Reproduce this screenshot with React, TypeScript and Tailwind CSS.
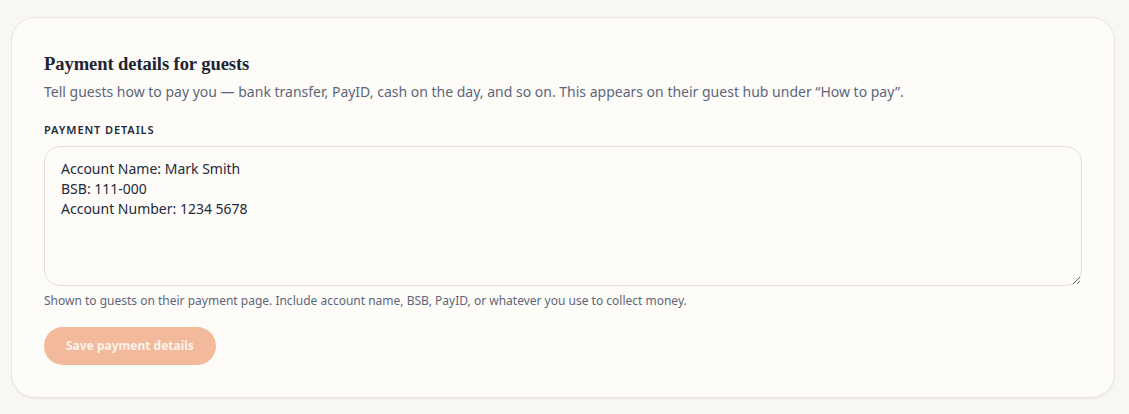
export default function App() {
  return (
    <div className="min-h-[414px] bg-[#f8f7f3] px-[11px] pt-[17px] font-['Noto_Sans',sans-serif]">
      <div className="w-[1104px] rounded-[24px] border border-[#ebe8e1] bg-[#fdfcf9] px-8 pt-8 pb-8 shadow-[0_1px_2px_rgba(0,0,0,0.06)]">
        <h2 className="font-['Liberation_Serif',serif] text-[18.6px] font-bold leading-7 tracking-[-0.1px] text-[#1f2433]">
          Payment details for guests
        </h2>
        <p className="mt-1 text-sm leading-5 text-[#5d6679]">
          Tell guests how to pay you — bank transfer, PayID, cash on the day, and so on. This appears on their guest hub under “How to pay”.
        </p>
        <label className="mt-5 block text-[11px] font-semibold uppercase leading-4 tracking-[0.9px] text-[#1f2a3a]">
          Payment details
        </label>
        <textarea
          className="mt-2 block h-[140px] w-full resize-y rounded-2xl border border-[#e3e0da] bg-[#fdfcf9] px-4 py-3 text-sm leading-5 text-[#1f2a3a] outline-none"
          defaultValue={"Account Name: Mark Smith\nBSB: 111-000\nAccount Number: 1234 5678"}
        />
        <p className="mt-[7px] text-xs leading-4 text-[#5d6679]">
          Shown to guests on their payment page. Include account name, BSB, PayID, or whatever you use to collect money.
        </p>
        <button className="mt-[18px] h-[38px] rounded-full bg-[#f2b99a] px-[22px] text-xs font-bold text-[#fdf3ec]">
          Save payment details
        </button>
      </div>
    </div>
  );
}
